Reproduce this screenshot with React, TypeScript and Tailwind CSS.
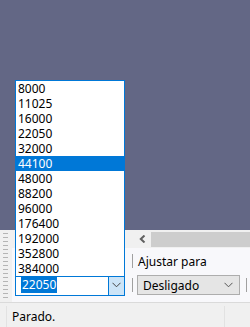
import React from "react";

const rates = [
  "8000",
  "11025",
  "16000",
  "22050",
  "32000",
  "44100",
  "48000",
  "88200",
  "96000",
  "176400",
  "192000",
  "352800",
  "384000",
];

const Chevron = ({ color = "#444" }: { color?: string }) => (
  <svg width="9" height="6" viewBox="0 0 9 6" fill="none">
    <path d="M0.5 0.8 L4.5 4.8 L8.5 0.8" stroke={color} strokeWidth="1" />
  </svg>
);

const App = () => {
  return (
    <div className="relative w-[250px] h-[327px] overflow-hidden bg-[#f0f0f0] text-[12px] text-black font-['Noto_Sans',sans-serif] leading-[15px]">
      {/* workspace */}
      <div className="h-[230px] bg-[#636785]" />

      {/* toolbar area */}
      <div className="flex h-[72px]">
        <div className="w-[12px] pt-[3px] pl-[3px]">
          <div className="w-[5px] h-[68px] bg-[repeating-linear-gradient(to_bottom,#b4b4b4_0px,#b4b4b4_1px,transparent_1px,transparent_4px)]" />
        </div>
        <div className="flex-1 flex flex-col">
          {/* horizontal scrollbar */}
          <div className="h-[18px] flex items-center pl-[121px]">
            <div className="w-[18px] h-[16px] flex items-center justify-center">
              <svg width="7" height="8" viewBox="0 0 7 8">
                <path d="M5.5 0.5 L1.8 4 L5.5 7.5" stroke="#606060" strokeWidth="2" fill="none" />
              </svg>
            </div>
            <div className="flex-1 h-[15px] bg-[#cdcdcd]" />
          </div>
          {/* panel */}
          <div className="flex-1 bg-[#f8f8fb] flex flex-col">
            <div className="h-[26px] flex items-center pl-[120px]">
              <div className="w-px h-[14px] bg-[#a0a0a0]" />
              <span className="ml-[5px]">Ajustar para</span>
            </div>
            <div className="flex items-center h-[22px] pl-[3px]">
              {/* rate combo */}
              <div className="w-[110px] h-[22px] border border-[#0078d7] bg-white flex">
                <div className="flex-1 flex items-center pl-[5px]">
                  <span className="bg-[#0078d7] text-white px-px leading-[16px]">22050</span>
                </div>
                <div className="w-[16px] bg-[#cce4f7] border-l border-[#0078d7] flex items-center justify-center">
                  <Chevron />
                </div>
              </div>
              <div className="ml-[7px] w-px h-[14px] bg-[#a0a0a0]" />
              <div className="ml-[4px] w-[103px] h-[20px] bg-[#e5e5e5] border border-[#adadad] flex items-center justify-between pl-[5px] pr-[6px]">
                <span>Desligado</span>
                <Chevron color="#555" />
              </div>
              <div className="ml-[6px] w-px h-[14px] bg-[#a0a0a0]" />
            </div>
          </div>
        </div>
      </div>

      {/* status bar */}
      <div className="h-[25px] border-t border-[#dadada] flex items-center">
        <div className="w-[7px] self-stretch border-r border-[#e2e2e2] mt-[3px]" />
        <span className="ml-[5px] mt-[3px]">Parado.</span>
        <div className="ml-auto mr-[25px] w-px self-stretch bg-[#e2e2e2] mt-[3px]" />
      </div>

      {/* opened dropdown list */}
      <div className="absolute left-[15px] top-[80px] w-[110px] h-[197px] border border-[#0078d7] bg-white">
        {rates.map((r) => (
          <div
            key={r}
            className={
              r === "44100"
                ? "h-[15px] flex items-center pl-[2px] bg-[#0078d7] text-white"
                : "h-[15px] flex items-center pl-[2px]"
            }
          >
            {r}
          </div>
        ))}
      </div>
    </div>
  );
};

export default App;
